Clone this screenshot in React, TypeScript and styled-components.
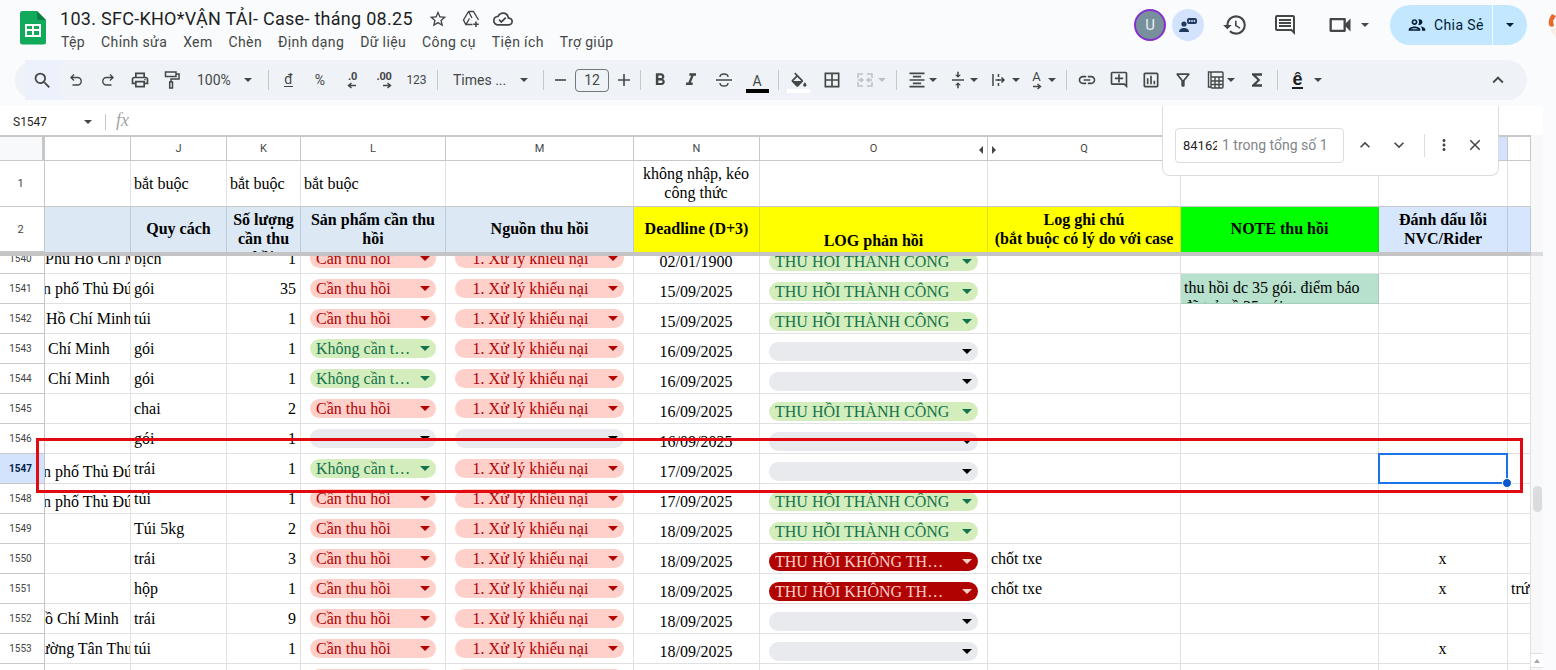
import React from "react";
import styled, { createGlobalStyle } from "styled-components";
import {
	MdBorderAll,
	MdClose,
	MdFormatAlignCenter,
	MdFormatBold,
	MdFormatItalic,
	MdFunctions,
	MdHistory,
	MdKeyboardArrowDown,
	MdKeyboardArrowUp,
	MdLink,
	MdMoreVert,
	MdOutlineAddComment,
	MdOutlineAssessment,
	MdOutlineCloudDone,
	MdOutlineComment,
	MdOutlineFilterAlt,
	MdOutlinePeople,
	MdOutlinePrint,
	MdOutlineVideocam,
	MdSearch,
	MdStarBorder,
	MdVerticalAlignCenter,
} from "react-icons/md";

const UI_FONT = `Roboto, "Open Sans", sans-serif`;
const CELL_FONT = `"Liberation Serif", "Times New Roman", serif`;
const COLS = "45px 86px 96px 74px 145px 188px 126px 228px 193px 198px 129px 23px";
const ICON = "#444746";

const GlobalStyle = createGlobalStyle`
	html, body {
		margin: 0;
		padding: 0;
		background: #f9fbfd;
	}
`;

const Page = styled.div`
	position: relative;
	width: 1556px;
	height: 670px;
	overflow: hidden;
	background: #f9fbfd;
	font-family: ${UI_FONT};
`;

const TitleBar = styled.header`
	display: flex;
	height: 60px;
	box-sizing: border-box;
	padding-left: 20px;
`;

const LogoWrap = styled.div`
	width: 26px;
	padding-top: 11px;
	margin-right: 14px;
`;

const TitleBlock = styled.div`
	display: flex;
	flex-direction: column;
	padding-top: 6px;
`;

const TitleLine = styled.div`
	display: flex;
	align-items: center;
	height: 25px;
	color: #1f1f1f;
`;

const DocName = styled.span`
	font-size: 18px;
	letter-spacing: 0.28px;
	margin-right: 9px;
	white-space: nowrap;
`;

const TitleIcon = styled.span`
	display: flex;
	justify-content: center;
	width: 32.5px;
	color: ${ICON};
`;

const MenuBar = styled.nav`
	display: flex;
	gap: 16px;
	height: 22px;
	align-items: center;
	margin-left: 1px;
	font-size: 14px;
	letter-spacing: 0.37px;
	color: #444746;
	white-space: nowrap;
`;

const HeaderRight = styled.div`
	display: flex;
	align-items: flex-start;
	margin-left: auto;
	position: relative;
	padding-right: 29px;
`;

const Avatar = styled.div`
	width: 32px;
	height: 32px;
	margin-top: 9px;
	box-sizing: border-box;
	border: 2px solid #8430ce;
	border-radius: 50%;
	background: #78909c;
	color: #e8eef2;
	font-size: 15px;
	display: flex;
	align-items: center;
	justify-content: center;
`;

const ChatBadge = styled.div`
	width: 32px;
	height: 32px;
	margin: 9px 0 0 6px;
	border-radius: 50%;
	background: #d3e3fd;
	display: flex;
	align-items: center;
	justify-content: center;
`;

const HeaderIcon = styled.div<{ $w: number }>`
	width: ${(p) => p.$w}px;
	height: 50px;
	display: flex;
	align-items: center;
	justify-content: center;
	color: ${ICON};
`;

const VideoButton = styled(HeaderIcon)`
	justify-content: flex-start;
	box-sizing: border-box;
	padding-left: 21px;
	gap: 7px;
`;

const ShareButton = styled.div`
	display: flex;
	width: 137px;
	height: 40px;
	margin-top: 5px;
	border-radius: 20px;
	background: #c2e7ff;
	color: #001d35;
	font-size: 14px;
	letter-spacing: 0.4px;
`;

const ShareMain = styled.div`
	display: flex;
	align-items: center;
	gap: 7px;
	width: 103px;
	box-sizing: border-box;
	padding-left: 17px;
	border-right: 1px solid #f4faff;
`;

const ShareCaret = styled.div`
	flex: 1;
	display: flex;
	align-items: center;
	justify-content: center;
`;

const EdgeAvatar = styled.svg`
	position: absolute;
	right: 0;
	top: 12px;
`;

const Caret = styled.span<{ $color?: string }>`
	display: inline-block;
	flex: none;
	width: 0;
	height: 0;
	border-left: 4.5px solid transparent;
	border-right: 4.5px solid transparent;
	border-top: 4.5px solid ${(p) => p.$color || ICON};
`;

const Toolbar = styled.div`
	display: flex;
	align-items: center;
	width: 1512px;
	height: 40px;
	margin-left: 15px;
	box-sizing: border-box;
	padding-left: 10px;
	border-radius: 20px;
	background: #eff3f8;
	color: ${ICON};
`;

const ToolButton = styled.div<{ $w: number; $gap?: number }>`
	display: flex;
	flex: none;
	align-items: center;
	justify-content: center;
	gap: ${(p) => p.$gap ?? 0}px;
	width: ${(p) => p.$w}px;
	height: 28px;
	font-size: 14px;
`;

const SearchButton = styled(ToolButton)`
	background: #ecf1fb;
	height: 40px;
`;

const ToolSep = styled.div`
	flex: none;
	width: 1px;
	height: 20px;
	margin: 0 4px;
	background: #c7c7c7;
`;

const SelectButton = styled.div<{ $w: number; $pad: number; $gap: number }>`
	display: flex;
	flex: none;
	align-items: center;
	box-sizing: border-box;
	width: ${(p) => p.$w}px;
	padding-left: ${(p) => p.$pad}px;
	gap: ${(p) => p.$gap}px;
	font-size: 14px;
	white-space: nowrap;
`;

const SizeBox = styled.div`
	flex: none;
	width: 34px;
	height: 23px;
	margin: 0 2px;
	box-sizing: border-box;
	border: 1px solid #747775;
	border-radius: 4px;
	font-size: 14px;
	color: #444746;
	display: flex;
	align-items: center;
	justify-content: center;
`;

const DongText = styled.span`
	font-size: 14px;
	border-bottom: 1px solid ${ICON};
	line-height: 13px;
`;

const SmallText = styled.span<{ $size?: number }>`
	font-size: ${(p) => p.$size ?? 12}px;
`;

const DecimalStack = styled.div`
	display: flex;
	flex-direction: column;
	align-items: flex-end;
	font-size: 11px;
	font-weight: 700;
	line-height: 11px;
	letter-spacing: -0.2px;
`;

const ColorStack = styled.div`
	display: flex;
	flex-direction: column;
	align-items: center;
	justify-content: flex-end;
	height: 26px;
`;

const ColorLetter = styled.span`
	font-size: 14px;
	line-height: 16px;
`;

const ColorBar = styled.span<{ $color: string }>`
	width: 23px;
	height: 4px;
	background: ${(p) => p.$color};
`;

const RotateStack = styled.div`
	display: flex;
	flex-direction: column;
	align-items: center;
	font-size: 13px;
	line-height: 12px;
`;

const InputToolGlyph = styled.span`
	font-size: 18px;
	font-weight: 700;
	line-height: 15px;
	color: #1f1f1f;
	border-bottom: 2px solid #1f1f1f;
	font-family: "Liberation Sans", sans-serif;
`;

const CollapseButton = styled(ToolButton)`
	margin-left: auto;
	margin-right: 13px;
`;

const FormulaBar = styled.div`
	display: flex;
	align-items: center;
	width: 1543px;
	height: 29px;
	margin-top: 6px;
	background: #fff;
`;

const NameBox = styled.div`
	display: flex;
	align-items: center;
	justify-content: space-between;
	width: 79px;
	margin-left: 13px;
	padding-top: 2px;
	font-size: 12px;
	color: #1f1f1f;
`;

const BarSep = styled.div`
	width: 1px;
	height: 16px;
	margin: 2px 10px 0 13px;
	background: #c7c7c7;
`;

const FxMark = styled.span`
	font-family: ${CELL_FONT};
	font-style: italic;
	font-size: 18px;
	color: #a0a4a8;
`;

const SheetArea = styled.div`
	display: flex;
	height: 535px;
`;

const Grid = styled.div`
	width: 1531px;
	overflow: hidden;
	background: #fff;
	font-family: ${CELL_FONT};
	font-size: 16px;
	color: #000;
`;

const Gutter = styled.div`
	position: relative;
	width: 12px;
	background: #f8f8f8;
`;

const GutterFreeze = styled.div`
	position: absolute;
	top: 117px;
	left: 0;
	right: 0;
	height: 4px;
	background: #dadce0;
`;

const ScrollThumb = styled.div`
	position: absolute;
	top: 351px;
	left: 2px;
	width: 9px;
	height: 26px;
	border-radius: 5px;
	background: #dadce0;
`;

const ScrollArrow = styled.div`
	position: absolute;
	top: 518px;
	left: 0;
	right: 0;
	height: 15px;
	box-sizing: border-box;
	border-top: 1px solid #e1e1e1;
	border-bottom: 1px solid #e1e1e1;
	background: #fff;
	display: flex;
	align-items: center;
	justify-content: center;
	&::after {
		content: "";
		border-left: 3px solid transparent;
		border-right: 3px solid transparent;
		border-bottom: 4px solid #a8a8a8;
	}
`;

const GridRow = styled.div<{ $h: number }>`
	display: grid;
	grid-template-columns: ${COLS};
	height: ${(p) => p.$h}px;
`;

const ColumnRow = styled(GridRow)`
	box-sizing: border-box;
	border-top: 2px solid #c7c7c7;
	font-family: ${UI_FONT};
	font-size: 11px;
	color: #444746;
`;

const Corner = styled.div`
	box-sizing: border-box;
	background: #f8f9fa;
	border-right: 3px solid #c7c7c7;
	border-bottom: 1px solid #c7c7c7;
`;

const ColumnCell = styled.div<{ $active?: boolean }>`
	position: relative;
	display: flex;
	align-items: center;
	justify-content: center;
	box-sizing: border-box;
	background: ${(p) => (p.$active ? "#d3e3fd" : "#fff")};
	border-right: 1px solid #c7c7c7;
	border-bottom: 1px solid #c7c7c7;
`;

const HiddenMark = styled.span<{ $side: "left" | "right" }>`
	position: absolute;
	top: 9px;
	${(p) => p.$side}: 4px;
	border-top: 4px solid transparent;
	border-bottom: 4px solid transparent;
	${(p) =>
		p.$side === "right"
			? "border-right: 4px solid #444746;"
			: "border-left: 4px solid #444746;"}
`;

const RowHead = styled.div<{ $active?: boolean; $frozen?: boolean }>`
	display: flex;
	align-items: center;
	justify-content: center;
	box-sizing: border-box;
	padding-right: 3px;
	font-family: ${UI_FONT};
	font-size: ${(p) => (p.$frozen ? 11 : 10)}px;
	font-weight: ${(p) => (p.$active ? 700 : 400)};
	color: ${(p) => (p.$active ? "#041e49" : "#444746")};
	background: ${(p) => (p.$active ? "#d3e3fd" : "#fff")};
	border-right: 1px solid #c7c7c7;
	border-bottom: 1px solid #c7c7c7;
`;

const Cell = styled.div<{
	$align?: "left" | "right" | "center";
	$low?: boolean;
	$bg?: string;
}>`
	position: relative;
	display: flex;
	align-items: ${(p) => (p.$low ? "flex-end" : "center")};
	justify-content: ${(p) =>
		p.$align === "right" ? "flex-end" : p.$align === "center" ? "center" : "flex-start"};
	box-sizing: border-box;
	padding: ${(p) => (p.$low ? "0 4px 2px 3px" : "0 4px 0 3px")};
	overflow: hidden;
	white-space: nowrap;
	line-height: 19px;
	background: ${(p) => p.$bg || "#fff"};
	border-right: 1px solid #e1e1e1;
	border-bottom: 1px solid #e1e1e1;
`;

const ClippedCell = styled(Cell)`
	padding-left: 0;
	padding-right: 0;
`;

const ClippedText = styled.span<{ $inset: number }>`
	margin-left: ${(p) => p.$inset}px;
`;

const NoteCell = styled(Cell)`
	display: block;
	padding: 4px 4px 0 3px;
	white-space: pre-line;
	border-color: #a3cdb8;
`;

const PillCell = styled(Cell)`
	padding: ${(p) => (p.$low ? "0 9px 2px 9px" : "0 9px 0 9px")};
`;

const SelectedCell = styled(Cell)`
	overflow: visible;
`;

const SelectionBox = styled.div`
	position: absolute;
	inset: -1px;
	border: 2px solid #1a73e8;
	z-index: 2;
`;

const FillHandle = styled.div`
	position: absolute;
	right: -6px;
	bottom: -6px;
	width: 8px;
	height: 8px;
	border-radius: 50%;
	background: #0b57d0;
	border: 0.5px solid #fff;
`;

const TONES = {
	red: { bg: "#ffcfc9", fg: "#b10202", arrow: "#b10202" },
	green: { bg: "#d4edbc", fg: "#11734b", arrow: "#11734b" },
	gray: { bg: "#e8eaed", fg: "#000", arrow: "#000" },
	dark: { bg: "#b10202", fg: "#ffcfc9", arrow: "#ffcfc9" },
};

type Tone = keyof typeof TONES;

const Pill = styled.div<{ $tone: Tone }>`
	display: flex;
	align-items: center;
	width: 100%;
	height: 19px;
	box-sizing: border-box;
	padding: 0 6px;
	border-radius: 10px;
	background: ${(p) => TONES[p.$tone].bg};
	color: ${(p) => TONES[p.$tone].fg};
`;

const PillText = styled.span<{ $center?: boolean; $room: number }>`
	flex: 1;
	min-width: 0;
	margin-right: ${(p) => p.$room}px;
	overflow: hidden;
	text-overflow: ellipsis;
	text-align: ${(p) => (p.$center ? "center" : "left")};
`;

const PillCaret = styled.span<{ $color: string }>`
	flex: none;
	width: 0;
	height: 0;
	border-left: 5px solid transparent;
	border-right: 5px solid transparent;
	border-top: 5.5px solid ${(p) => p.$color};
`;

const FrozenLabel = styled(Cell)`
	border-color: #e1e1e1 #e1e1e1 #c7c7c7;
`;

const WrappedLabel = styled(FrozenLabel)`
	display: block;
	padding-top: 3px;
	text-align: center;
	white-space: pre-line;
`;

const HeadCell = styled.div<{ $bg: string; $line: string; $place?: "top" | "bottom" }>`
	display: flex;
	flex-direction: column;
	align-items: center;
	justify-content: ${(p) =>
		p.$place === "top" ? "flex-start" : p.$place === "bottom" ? "flex-end" : "center"};
	box-sizing: border-box;
	padding: ${(p) => (p.$place === "top" ? "3px 2px 0" : "0 2px 2px")};
	overflow: hidden;
	text-align: center;
	white-space: pre-line;
	font-weight: 700;
	line-height: 19px;
	background: ${(p) => p.$bg};
	border-right: 1px solid ${(p) => p.$line};
`;

const FreezeBar = styled.div`
	height: 4px;
	background: #c4c4c4;
`;

const RowsViewport = styled.div`
	height: 414px;
	overflow: hidden;
`;

const RowsInner = styled.div`
	margin-top: -12px;
`;

const FindPanel = styled.div`
	position: absolute;
	top: 106px;
	left: 1162px;
	display: flex;
	align-items: center;
	width: 337px;
	height: 70px;
	box-sizing: border-box;
	padding: 9px 0 0 12px;
	background: #fff;
	border: 1px solid #dadce0;
	border-top: 0;
	border-radius: 0 0 8px 8px;
	color: ${ICON};
`;

const FindInput = styled.div`
	display: flex;
	align-items: center;
	width: 169px;
	height: 35px;
	box-sizing: border-box;
	padding-left: 7px;
	border: 1px solid #dadce0;
	border-radius: 4px;
	font-size: 14px;
	white-space: nowrap;
`;

const FindQuery = styled.span`
	width: 34px;
	margin-right: 5px;
	overflow: hidden;
	font-size: 13px;
	color: #1f1f1f;
`;

const FindCount = styled.span`
	color: #80868b;
`;

const FindButton = styled.div<{ $w: number }>`
	display: flex;
	align-items: center;
	justify-content: center;
	width: ${(p) => p.$w}px;
`;

const FindSep = styled.div`
	width: 1px;
	height: 23px;
	background: #dadce0;
	margin: 0 2px 0 12px;
`;

const RedFrame = styled.div`
	position: absolute;
	top: 438px;
	left: 36px;
	width: 1487px;
	height: 55px;
	box-sizing: border-box;
	border: 3px solid #e00a10;
	pointer-events: none;
`;

const SheetsLogo = () => (
	<svg width="26" height="34" viewBox="0 0 26 34">
		<path
			d="M2.5 0H17L26 9V31a2.5 2.5 0 0 1-2.5 2.5H2.5A2.5 2.5 0 0 1 0 31V2.5A2.5 2.5 0 0 1 2.5 0z"
			fill="#11a95a"
		/>
		<path d="M17 0L26 9H19a2 2 0 0 1-2-2z" fill="#0a8043" />
		<path
			d="M5 13h16v13H5zM7 15v3h5v-3zM14 15v3h5v-3zM7 20v4h5v-4zM14 20v4h5v-4z"
			fill="#fff"
			fillRule="evenodd"
		/>
	</svg>
);

const DriveIcon = () => (
	<svg width="20" height="20" viewBox="0 0 20 20" fill="none" stroke={ICON} strokeWidth="1.4">
		<path d="M7.500 2.500h5l5 8.500M7.500 2.500 2.500 11l2.300 4.500h6.700M7.500 2.500 11 9M5 15.500 8.500 9.500" />
		<path d="M15 12.500v5.500M12.200 15.200h5.600" strokeWidth="1.6" />
	</svg>
);

const ChatIcon = () => (
	<svg width="20" height="20" viewBox="0 0 20 20" fill="#1f3a5f">
		<circle cx="6" cy="9" r="2.6" />
		<path d="M1 17c0-2.6 2.4-4 5-4s5 1.4 5 4z" />
		<rect x="9" y="3" width="10" height="6" rx="2" />
		<circle cx="11.6" cy="6" r="0.9" fill="#d3e3fd" />
		<circle cx="14" cy="6" r="0.9" fill="#d3e3fd" />
		<circle cx="16.4" cy="6" r="0.9" fill="#d3e3fd" />
	</svg>
);

const UndoIcon = ({ flip }: { flip?: boolean }) => (
	<svg
		width="14"
		height="14"
		viewBox="0 0 14 14"
		fill="none"
		stroke={ICON}
		strokeWidth="1.4"
		style={flip ? { transform: "scaleX(-1)" } : undefined}
	>
		<path d="M5 1.500 2 4.500l3 3M2 4.500h6.500a3.700 3.700 0 0 1 0 7.500H3.500" />
	</svg>
);

const PaintIcon = () => (
	<svg width="18" height="20" viewBox="0 0 18 20" fill="none" stroke={ICON} strokeWidth="1.5">
		<path d="M2.500 2h10.500v4.500H2.500zM13 4h3v5H8v3M6.700 12h2.800v6H6.700z" />
	</svg>
);

const StrikeIcon = () => (
	<svg width="18" height="18" viewBox="0 0 18 18" fill="none" stroke={ICON} strokeWidth="1.4">
		<path d="M5 6c0-2 1.800-3 4-3s4 1 4 3M1 9h16M5 12c0 2 1.800 3 4 3s4-1 4-3" />
	</svg>
);

const ArrowGlyph = ({ flip }: { flip?: boolean }) => (
	<svg width="10" height="7" viewBox="0 0 10 7" style={flip ? { transform: "scaleX(-1)" } : undefined}>
		<path d="M1 3.5h7M5.5 1l3 2.5-3 2.5" fill="none" stroke={ICON} strokeWidth="1.5" />
	</svg>
);

const FillIcon = () => (
	<svg width="20" height="17" viewBox="0 0 24 19" fill={ICON}>
		<path d="M16.56 8.94L7.62 0 6.21 1.41l2.38 2.38-5.15 5.15c-.59.59-.59 1.54 0 2.12l5.5 5.5c.29.29.68.44 1.06.44s.77-.15 1.06-.44l5.5-5.5c.59-.58.59-1.53 0-2.12zM5.21 10L10 5.21 14.79 10H5.21zM19 11.5s-2 2.17-2 3.5c0 1.1.9 2 2 2s2-.9 2-2c0-1.33-2-3.5-2-3.5z" />
	</svg>
);

const MergeIcon = () => (
	<svg width="18" height="18" viewBox="0 0 18 18" fill="none" stroke="#bdc1c6" strokeWidth="1.5">
		<path d="M7 3H2v4M2 11v4h5M11 3h5v4M16 11v4h-5M2 9h4M4.5 7 7 9l-2.500 2M16 9h-4M13.500 7 11 9l2.500 2" />
	</svg>
);

const OverflowIcon = () => (
	<svg width="18" height="18" viewBox="0 0 18 18" fill="none" stroke={ICON} strokeWidth="1.5">
		<path d="M3 3v12M8.500 3v3M8.500 8v2M8.500 12v3M5.500 9H14M11.500 6.500 14 9l-2.500 2.500" />
	</svg>
);

const CalcIcon = () => (
	<svg width="20" height="20" viewBox="0 0 20 20" fill="none" stroke={ICON} strokeWidth="1.4">
		<path d="M6 2H3.500v15H6" />
		<rect x="6" y="2" width="12" height="16" rx="1" />
		<path d="M6 7h12M10 7v11M14 7v11M6 11h12M6 14.500h12" />
	</svg>
);

type PillSpec = { tone: Tone; label: string };

const NEED: PillSpec = { tone: "red", label: "Cần thu hồi" };
const SKIP: PillSpec = { tone: "green", label: "Không cần thu hồi" };
const EMPTY: PillSpec = { tone: "gray", label: "" };
const CLAIM: PillSpec = { tone: "red", label: "1. Xử lý khiếu nại" };
const DONE: PillSpec = { tone: "green", label: "THU HỒI THÀNH CÔNG" };
const FAILED: PillSpec = { tone: "dark", label: "THU HỒI KHÔNG THÀNH CÔNG" };

type RowData = {
	id: number;
	place?: string;
	inset?: number;
	placeLow?: boolean;
	unit: string;
	qty: string;
	product: PillSpec;
	source: PillSpec;
	deadline: string;
	log: PillSpec;
	remark?: string;
	note?: string;
	mark?: string;
	extra?: string;
};

const ROWS: RowData[] = [
	{ id: 1540, place: "Phú Hồ Chí Minh", inset: 0, unit: "bịch", qty: "1", product: NEED, source: CLAIM, deadline: "02/01/1900", log: DONE },
	{ id: 1541, place: "n phố Thủ Đức", inset: -2, unit: "gói", qty: "35", product: NEED, source: CLAIM, deadline: "15/09/2025", log: DONE, note: "thu hồi dc 35 gói. điểm báo\nđã trả về 35 gói" },
	{ id: 1542, place: "Hồ Chí Minh", inset: 1, unit: "túi", qty: "1", product: NEED, source: CLAIM, deadline: "15/09/2025", log: DONE },
	{ id: 1543, place: "Chí Minh", inset: 3, unit: "gói", qty: "1", product: SKIP, source: CLAIM, deadline: "16/09/2025", log: EMPTY },
	{ id: 1544, place: "Chí Minh", inset: 3, unit: "gói", qty: "1", product: SKIP, source: CLAIM, deadline: "16/09/2025", log: EMPTY },
	{ id: 1545, unit: "chai", qty: "2", product: NEED, source: CLAIM, deadline: "16/09/2025", log: DONE },
	{ id: 1546, unit: "gói", qty: "1", product: EMPTY, source: EMPTY, deadline: "16/09/2025", log: EMPTY },
	{ id: 1547, place: "n phố Thủ Đức", inset: -2, placeLow: true, unit: "trái", qty: "1", product: SKIP, source: CLAIM, deadline: "17/09/2025", log: EMPTY },
	{ id: 1548, place: "n phố Thủ Đức", inset: -2, placeLow: true, unit: "túi", qty: "1", product: NEED, source: CLAIM, deadline: "17/09/2025", log: DONE },
	{ id: 1549, unit: "Túi 5kg", qty: "2", product: NEED, source: CLAIM, deadline: "18/09/2025", log: DONE },
	{ id: 1550, unit: "trái", qty: "3", product: NEED, source: CLAIM, deadline: "18/09/2025", log: FAILED, remark: "chốt txe", mark: "x" },
	{ id: 1551, unit: "hộp", qty: "1", product: NEED, source: CLAIM, deadline: "18/09/2025", log: FAILED, remark: "chốt txe", mark: "x", extra: "trứng" },
	{ id: 1552, place: "ồ Chí Minh", inset: 0, unit: "trái", qty: "9", product: NEED, source: CLAIM, deadline: "18/09/2025", log: EMPTY },
	{ id: 1553, place: "ường Tân Thuận", inset: -4, unit: "túi", qty: "1", product: NEED, source: CLAIM, deadline: "18/09/2025", log: EMPTY, mark: "x" },
	{ id: 1554, unit: "", qty: "", product: NEED, source: CLAIM, deadline: "", log: EMPTY },
];

const COLUMN_LETTERS = ["", "J", "K", "L", "M", "N", "O", "Q", "R", "S", ""];
const ACTIVE_ROW = 1547;

const StatusPill = ({ spec, center, room }: { spec: PillSpec; center?: boolean; room: number }) => (
	<Pill $tone={spec.tone}>
		<PillText $center={center} $room={room}>
			{spec.label}
		</PillText>
		<PillCaret $color={TONES[spec.tone].arrow} />
	</Pill>
);

const SheetRow = ({ row }: { row: RowData }) => {
	const active = row.id === ACTIVE_ROW;
	return (
		<GridRow $h={30}>
			<RowHead $active={active}>{row.id}</RowHead>
			<ClippedCell $low={row.placeLow}>
				{row.place && <ClippedText $inset={row.inset ?? 0}>{row.place}</ClippedText>}
			</ClippedCell>
			<Cell>{row.unit}</Cell>
			<Cell $align="right">{row.qty}</Cell>
			<PillCell>
				<StatusPill spec={row.product} room={8} />
			</PillCell>
			<PillCell>
				<StatusPill spec={row.source} center room={8} />
			</PillCell>
			<Cell $align="center" $low>
				{row.deadline}
			</Cell>
			<PillCell $low>
				<StatusPill spec={row.log} room={10} />
			</PillCell>
			<Cell>{row.remark}</Cell>
			{row.note ? <NoteCell $bg="#b7e1cd">{row.note}</NoteCell> : <Cell />}
			{active ? (
				<SelectedCell>
					<SelectionBox>
						<FillHandle />
					</SelectionBox>
				</SelectedCell>
			) : (
				<Cell $align="center">{row.mark}</Cell>
			)}
			<Cell>{row.extra}</Cell>
		</GridRow>
	);
};

export default function App() {
	return (
		<Page>
			<GlobalStyle />
			<TitleBar>
				<LogoWrap>
					<SheetsLogo />
				</LogoWrap>
				<TitleBlock>
					<TitleLine>
						<DocName>103. SFC-KHO*VẬN TẢI- Case- tháng 08.25</DocName>
						<TitleIcon>
							<MdStarBorder size={20} />
						</TitleIcon>
						<TitleIcon>
							<DriveIcon />
						</TitleIcon>
						<TitleIcon>
							<MdOutlineCloudDone size={20} />
						</TitleIcon>
					</TitleLine>
					<MenuBar>
						{["Tệp", "Chỉnh sửa", "Xem", "Chèn", "Định dạng", "Dữ liệu", "Công cụ", "Tiện ích", "Trợ giúp"].map((item) => (
							<span key={item}>{item}</span>
						))}
					</MenuBar>
				</TitleBlock>
				<HeaderRight>
					<Avatar>U</Avatar>
					<ChatBadge>
						<ChatIcon />
					</ChatBadge>
					<HeaderIcon $w={61}>
						<MdHistory size={26} />
					</HeaderIcon>
					<HeaderIcon $w={40}>
						<MdOutlineComment size={24} />
					</HeaderIcon>
					<VideoButton $w={85}>
						<MdOutlineVideocam size={28} />
						<Caret />
					</VideoButton>
					<ShareButton>
						<ShareMain>
							<MdOutlinePeople size={20} />
							<span>Chia Sẻ</span>
						</ShareMain>
						<ShareCaret>
							<Caret $color="#001d35" />
						</ShareCaret>
					</ShareButton>
					<EdgeAvatar width="8" height="26" viewBox="0 0 8 26">
						<path d="M4 2C1 6 0 10 1 13c1 2 3 2 5 1L5 9l3-5z" fill="#e8672a" />
						<path d="M2 16c1 4 3 7 6 9v-9z" fill="#f6efe8" />
					</EdgeAvatar>
				</HeaderRight>
			</TitleBar>

			<Toolbar>
				<SearchButton $w={35}>
					<MdSearch size={21} />
				</SearchButton>
				<ToolButton $w={32}>
					<UndoIcon />
				</ToolButton>
				<ToolButton $w={32}>
					<UndoIcon flip />
				</ToolButton>
				<ToolButton $w={32}>
					<MdOutlinePrint size={20} />
				</ToolButton>
				<ToolButton $w={31}>
					<PaintIcon />
				</ToolButton>
				<SelectButton $w={77} $pad={10} $gap={13}>
					<span>100%</span>
					<Caret />
				</SelectButton>
				<ToolSep />
				<ToolButton $w={31}>
					<DongText>đ</DongText>
				</ToolButton>
				<ToolButton $w={32}>
					<SmallText $size={14}>%</SmallText>
				</ToolButton>
				<ToolButton $w={32}>
					<DecimalStack>
						.0
						<ArrowGlyph flip />
					</DecimalStack>
				</ToolButton>
				<ToolButton $w={32}>
					<DecimalStack>
						.00
						<ArrowGlyph />
					</DecimalStack>
				</ToolButton>
				<ToolButton $w={33}>
					<SmallText>123</SmallText>
				</ToolButton>
				<ToolSep />
				<SelectButton $w={97} $pad={11} $gap={14}>
					<span>Times ...</span>
					<Caret />
				</SelectButton>
				<ToolSep />
				<ToolButton $w={25}>
					<svg width="11" height="2" viewBox="0 0 11 2">
						<path d="M0 1h11" stroke={ICON} strokeWidth="1.6" />
					</svg>
				</ToolButton>
				<SizeBox>12</SizeBox>
				<ToolButton $w={25}>
					<svg width="12" height="12" viewBox="0 0 12 12">
						<path d="M6 0v12M0 6h12" stroke={ICON} strokeWidth="1.6" />
					</svg>
				</ToolButton>
				<ToolSep />
				<ToolButton $w={30}>
					<MdFormatBold size={20} />
				</ToolButton>
				<ToolButton $w={32}>
					<MdFormatItalic size={20} />
				</ToolButton>
				<ToolButton $w={33}>
					<StrikeIcon />
				</ToolButton>
				<ToolButton $w={34}>
					<ColorStack>
						<ColorLetter>A</ColorLetter>
						<ColorBar $color="#000" />
					</ColorStack>
				</ToolButton>
				<ToolSep />
				<ToolButton $w={31}>
					<ColorStack>
						<FillIcon />
						<ColorBar $color="#fff" />
					</ColorStack>
				</ToolButton>
				<ToolButton $w={35}>
					<MdBorderAll size={20} />
				</ToolButton>
				<ToolButton $w={43} $gap={4}>
					<MergeIcon />
					<Caret $color="#bdc1c6" />
				</ToolButton>
				<ToolSep />
				<ToolButton $w={42} $gap={2}>
					<MdFormatAlignCenter size={20} />
					<Caret />
				</ToolButton>
				<ToolButton $w={41} $gap={3}>
					<MdVerticalAlignCenter size={18} />
					<Caret />
				</ToolButton>
				<ToolButton $w={41} $gap={4}>
					<OverflowIcon />
					<Caret />
				</ToolButton>
				<ToolButton $w={37} $gap={6}>
					<RotateStack>
						A
						<ArrowGlyph />
					</RotateStack>
					<Caret />
				</ToolButton>
				<ToolSep />
				<ToolButton $w={32}>
					<MdLink size={20} />
				</ToolButton>
				<ToolButton $w={32}>
					<MdOutlineAddComment size={20} />
				</ToolButton>
				<ToolButton $w={32}>
					<MdOutlineAssessment size={20} />
				</ToolButton>
				<ToolButton $w={32}>
					<MdOutlineFilterAlt size={20} />
				</ToolButton>
				<ToolButton $w={42} $gap={2}>
					<CalcIcon />
					<Caret />
				</ToolButton>
				<ToolButton $w={32}>
					<MdFunctions size={20} />
				</ToolButton>
				<ToolSep />
				<ToolButton $w={50} $gap={11}>
					<InputToolGlyph>ê</InputToolGlyph>
					<Caret />
				</ToolButton>
				<CollapseButton $w={32}>
					<MdKeyboardArrowUp size={22} />
				</CollapseButton>
			</Toolbar>

			<FormulaBar>
				<NameBox>
					<span>S1547</span>
					<Caret />
				</NameBox>
				<BarSep />
				<FxMark>fx</FxMark>
			</FormulaBar>

			<SheetArea>
				<Grid>
					<ColumnRow $h={26}>
						<Corner />
						{COLUMN_LETTERS.map((letter, i) => (
							<ColumnCell key={i} $active={letter === "S"}>
								{letter}
								{letter === "O" && <HiddenMark $side="right" />}
								{letter === "Q" && <HiddenMark $side="left" />}
							</ColumnCell>
						))}
					</ColumnRow>
					<GridRow $h={46}>
						<RowHead $frozen>1</RowHead>
						<FrozenLabel />
						<FrozenLabel>bắt buộc</FrozenLabel>
						<FrozenLabel>bắt buộc</FrozenLabel>
						<FrozenLabel>bắt buộc</FrozenLabel>
						<FrozenLabel />
						<WrappedLabel>{"không nhập, kéo\ncông thức"}</WrappedLabel>
						<FrozenLabel />
						<FrozenLabel />
						<FrozenLabel />
						<FrozenLabel />
						<FrozenLabel />
					</GridRow>
					<GridRow $h={45}>
						<RowHead $frozen>2</RowHead>
						<HeadCell $bg="#dce9f5" $line="#b9cbdc" />
						<HeadCell $bg="#dce9f5" $line="#b9cbdc">
							Quy cách
						</HeadCell>
						<HeadCell $bg="#dce9f5" $line="#b9cbdc" $place="top">
							{"Số lượng\ncần thu\nhồi"}
						</HeadCell>
						<HeadCell $bg="#dce9f5" $line="#b9cbdc">
							{"Sản phẩm cần thu\nhồi"}
						</HeadCell>
						<HeadCell $bg="#dce9f5" $line="#b9cbdc">
							Nguồn thu hồi
						</HeadCell>
						<HeadCell $bg="#ffff00" $line="#dede1a">
							Deadline (D+3)
						</HeadCell>
						<HeadCell $bg="#ffff00" $line="#dede1a" $place="bottom">
							LOG phản hồi
						</HeadCell>
						<HeadCell $bg="#ffff00" $line="#dede1a" $place="top">
							{"Log ghi chú\n(bắt buộc có lý do với case"}
						</HeadCell>
						<HeadCell $bg="#00ff00" $line="#19d419">
							NOTE thu hồi
						</HeadCell>
						<HeadCell $bg="#d6e6fc" $line="#b6c8de">
							{"Đánh dấu lỗi\nNVC/Rider"}
						</HeadCell>
						<HeadCell $bg="#d6e6fc" $line="#b6c8de" />
					</GridRow>
					<FreezeBar />
					<RowsViewport>
						<RowsInner>
							{ROWS.map((row) => (
								<SheetRow key={row.id} row={row} />
							))}
						</RowsInner>
					</RowsViewport>
				</Grid>
				<Gutter>
					<GutterFreeze />
					<ScrollThumb />
					<ScrollArrow />
				</Gutter>
			</SheetArea>

			<FindPanel>
				<FindInput>
					<FindQuery>8416208</FindQuery>
					<FindCount>1 trong tổng số 1</FindCount>
				</FindInput>
				<FindButton $w={42}>
					<MdKeyboardArrowUp size={20} />
				</FindButton>
				<FindButton $w={26}>
					<MdKeyboardArrowDown size={20} />
				</FindButton>
				<FindSep />
				<FindButton $w={34}>
					<MdMoreVert size={18} />
				</FindButton>
				<FindButton $w={28}>
					<MdClose size={18} />
				</FindButton>
			</FindPanel>

			<RedFrame />
		</Page>
	);
}
